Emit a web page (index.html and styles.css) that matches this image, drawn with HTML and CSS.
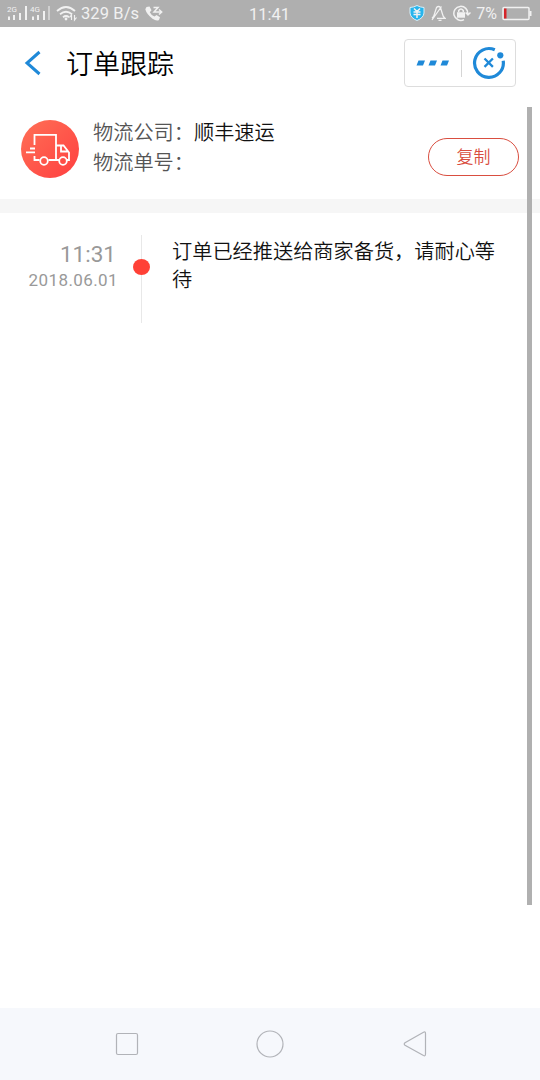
FILE: index.html
```html
<!DOCTYPE html>
<html lang="zh-CN">
<head>
  <meta charset="UTF-8" />
  <meta name="viewport" content="width=device-width, initial-scale=1.0"/>
  <title>订单跟踪</title>
  <link rel="stylesheet" href="styles.css">
</head>
<body>

  <div class="phone">
    <div class="status-bar">
      <div class="status-left">
        <svg class="signal" width="44" height="27" viewBox="0 0 44 27">
          <text x="0" y="12">2G</text>
          <text x="23" y="12">4G</text>
          <path d="M2 16.500v3.500M7 15v5M13 13v7M19 6v14M26 16.500v3.500M31 15v5M37 11v9" />
          <path class="dim" d="M42 6v14" />
        </svg>
        <svg class="wifi" width="22" height="27" viewBox="0 0 22 27">
          <path d="M1 11q9-8 18 0M4 14.300q6-5 12 0M7 17.300q3-2.500 6 0" />
          <circle cx="10" cy="19" r="1.400" />
          <path class="arrows" d="M15.500 20v-5l-2 2.500M18.500 15v5l2-2.500" />
        </svg>
        <span class="speed">329 B/s</span>
        <svg class="call" width="20" height="27" viewBox="0 0 20 27">
          <path class="handset" d="M2.500 7 5.500 6.500 7.500 10.300 5.800 12.200Q7 15 10.500 16.500L12.500 15 16 17.200 15 20Q12.500 21.500 8.500 18.700 2.500 14 1.300 9.200Z" />
          <path d="M9.500 7.500h4.500l-4 4.500h7.500M15 9.500l2.700 2.500-2.700 2.500" />
        </svg>
      </div>
      <span class="clock">11:41</span>
      <div class="status-right">
        <svg width="16" height="27" viewBox="0 0 16 27">
          <path class="shield" d="M8 5.500Q11 7.300 15 7.500V13Q14.500 18 8 20.500 1.500 18 1 13V7.500Q5 7.300 8 5.500Z" />
          <path class="yen" d="M5 8.500l3 3 3-3M4.500 12h7M4.500 14.500h7M8 11.500V18" />
        </svg>
        <svg class="bell" width="16" height="27" viewBox="0 0 16 27">
          <path d="M7 18.300h8q-2-1.500-2.600-4.500L10.500 7.500Q8.500 5.500 6.500 7.500L4.500 13.800q-.6 3-2.500 4.500M8.500 20.300h3M11.500 6.500 2 20" />
        </svg>
        <svg class="lock" width="19" height="27" viewBox="0 0 19 27">
          <path d="M15.800 14A7 7 0 1 0 12 19.600M13.700 12.500l2.300 2.500 2.500-2.500" />
          <rect x="5" y="12.200" width="8" height="5.500" />
          <path d="M6.700 12v-1.500q2.300-3 4.600 0V12" />
        </svg>
        <span class="percent">7%</span>
        <svg class="battery" width="30" height="27" viewBox="0 0 30 27">
          <rect class="case" x="1" y="7.500" width="26" height="12" rx="1" />
          <rect class="tip" x="27.500" y="11" width="2" height="5" />
          <rect class="level" x="2" y="8.500" width="2.500" height="10" />
        </svg>
      </div>
    </div>

    <header class="header">
      <svg class="back" width="18" height="26" viewBox="0 0 18 26">
        <path d="M16.500 2 4 13 16.500 24" />
      </svg>
      <h1>订单跟踪</h1>
      <div class="capsule">
        <svg width="34" height="8" viewBox="0 0 34 8">
          <path d="M2.500 1.500H9L7 6.500H.500ZM14.500 1.500H21L19 6.500H12.500ZM26.500 1.500H33L31 6.500H24.500Z" />
        </svg>
        <span class="divider"></span>
        <svg class="close" width="34" height="34" viewBox="0 0 34 34">
          <path class="ring" d="M22.800 3.800A14.400 14.400 0 1 0 31.200 14.800" />
          <circle cx="28.300" cy="9.300" r="3.100" />
          <path class="cross" d="M12.500 12.500l8.400 8.400M20.900 12.500l-8.400 8.400" />
        </svg>
      </div>
    </header>

    <section class="shipping">
      <svg class="truck" width="58" height="58" viewBox="0 0 58 58">
        <defs>
          <linearGradient id="red" x1="0" y1="0" x2="1" y2="1">
            <stop offset="0" stop-color="#ff7056" />
            <stop offset="1" stop-color="#ff3f40" />
          </linearGradient>
        </defs>
        <circle cx="29" cy="29" r="29" fill="url(#red)" />
        <path d="M13.500 25V14.800H35V40M35 25.500h7.500l5.500 7V40h-2.500M38 40H27.500M18.500 40h-5v-4M40 26v5.500h7" />
        <path d="M9 28.500h5M5 32.300h9" />
        <circle class="wheel" cx="23" cy="41" r="3.800" />
        <circle class="wheel" cx="42" cy="41" r="3.800" />
      </svg>
      <div class="shipping-info">
        <p>物流公司：<span>顺丰速运</span></p>
        <p>物流单号：</p>
      </div>
      <button class="copy">复制</button>
    </section>

    <section class="timeline">
      <div class="when">
        <div class="time">11:31</div>
        <div class="date">2018.06.01</div>
      </div>
      <div class="track"><span class="dot"></span></div>
      <p class="message">订单已经推送给商家备货，请耐心等待</p>
    </section>

    <nav class="nav-bar">
      <svg width="24" height="28" viewBox="0 0 24 28">
        <rect x="1.500" y="3.500" width="21" height="21" rx="1.500" />
      </svg>
      <svg width="28" height="28" viewBox="0 0 28 28">
        <circle cx="14" cy="14" r="13" />
      </svg>
      <svg width="26" height="28" viewBox="0 0 26 28">
        <path d="M22.500 2.200Q24.500 1.200 24.500 3.500V24Q24.500 26.500 22.500 25.500L4 15.200Q2.500 14 4 12.700Z" />
      </svg>
    </nav>

    <div class="scrollbar"></div>
  </div>

</body>
</html>
```

FILE: styles.css
```css
* {
  box-sizing: border-box;
}

body {
  margin: 0;
  background: #fff;
  font-family: Roboto, "Noto Sans CJK SC", sans-serif;
}

h1, p {
  margin: 0;
  font-weight: 350;
}

svg {
  display: block;
  flex-shrink: 0;
  fill: none;
}

.phone {
  position: relative;
  display: flex;
  flex-direction: column;
  width: 540px;
  height: 1080px;
  overflow: hidden;
}

/* status bar */
.status-bar {
  display: grid;
  grid-template-columns: 1fr auto 1fr;
  height: 27px;
  padding: 0 8px 0 7px;
  background: #afafaf;
  color: #f1f1f1;
  font-size: 16px;
  line-height: 28px;
}

.status-bar svg {
  stroke: #f1f1f1;
  stroke-width: 1.5;
}

.status-left, .status-right {
  display: flex;
}

.status-right {
  justify-content: flex-end;
}

.signal text {
  fill: #f1f1f1;
  stroke: none;
  font-size: 8px;
}

.signal path {
  stroke-width: 2;
}

.signal .dim {
  stroke: #d0d0d0;
}

.status-bar .wifi {
  margin-left: 5px;
  stroke-width: 1.8;
}

.wifi circle, .call .handset, .lock rect, .battery .tip {
  fill: #f1f1f1;
  stroke: none;
}

.wifi .arrows {
  stroke-width: 1.2;
}

.speed {
  width: 61px;
  margin-left: 3px;
  font-size: 16.5px;
  letter-spacing: 0.1px;
  white-space: nowrap;
}

.call {
  margin-left: 2px;
}

.clock {
  font-size: 16.5px;
  line-height: 29px;
}

.status-bar .shield {
  fill: #27b4ec;
  stroke: #d4f0fb;
  stroke-width: 1;
}

.status-bar .bell {
  margin-left: 5px;
  stroke-width: 1.3;
}

.lock {
  margin-left: 6px;
}

.percent {
  margin-left: 5px;
}

.battery {
  margin-left: 5px;
}

.battery .level {
  fill: #d52429;
  stroke: none;
}

/* header */
.header {
  display: flex;
  align-items: center;
  height: 72px;
  padding: 0 24px 0 23px;
}

.back {
  stroke: #1f89d8;
  stroke-width: 3;
}

.header h1 {
  margin-left: 25px;
  padding-top: 4px;
  color: #000;
  font-size: 27px;
  line-height: 36px;
}

.capsule {
  display: flex;
  align-items: center;
  width: 112px;
  height: 48px;
  margin-left: auto;
  padding-left: 11px;
  border: 1px solid #ddd;
  border-radius: 4px;
}

.capsule svg {
  fill: #1f89d8;
}

.divider {
  width: 1px;
  height: 27px;
  margin: 0 10px 0 11px;
  background: #d5d5d5;
}

.close .ring, .close .cross {
  fill: none;
  stroke: #1f89d8;
  stroke-width: 3.2;
}

.close .cross {
  stroke-width: 2.3;
}

/* shipping info */
.shipping {
  display: flex;
  align-items: flex-start;
  height: 114px;
  padding: 18px 21px 0 21px;
  border-bottom: 14px solid #f6f6f6;
}

.truck {
  margin-top: 3px;
}

.truck path, .truck .wheel {
  stroke: #fff;
  stroke-width: 1.8;
}

.shipping-info {
  margin: 1px 0 0 14px;
  color: #555;
  font-size: 20.2px;
  line-height: 30px;
}

.shipping-info span {
  color: #111;
}

.copy {
  width: 91px;
  height: 38px;
  margin: 21px 0 0 auto;
  padding: 0 0 4px;
  border: 1.5px solid #d94e40;
  border-radius: 19px;
  background: #fff;
  color: #d94e40;
  font-family: inherit;
  font-size: 17px;
  font-weight: 350;
}

/* tracking timeline */
.timeline {
  display: flex;
  flex: 1;
  align-items: flex-start;
  padding: 22px 40px 0 0;
}

.when {
  width: 118px;
  padding-top: 5px;
  color: #999;
  text-align: right;
}

.time {
  padding-right: 2px;
  font-size: 22.5px;
  line-height: 28px;
}

.date {
  font-size: 17px;
  letter-spacing: 0.4px;
  line-height: 24px;
}

.track {
  display: flex;
  justify-content: center;
  width: 17px;
  height: 88px;
  margin-left: 15px;
  background: linear-gradient(#e8e8e8, #e8e8e8) center / 1px 100% no-repeat;
}

.dot {
  width: 17px;
  height: 16px;
  margin-top: 24px;
  border-radius: 50%;
  background: #ff4136;
}

.message {
  flex: 1;
  padding-top: 3px;
  margin-left: 22px;
  color: #111;
  font-size: 20.2px;
  line-height: 28px;
}

/* android navigation */
.nav-bar {
  display: flex;
  align-items: center;
  justify-content: space-between;
  height: 72px;
  padding: 0 113px 0 115px;
  background: #f6f8fc;
}

.nav-bar svg {
  stroke: #b1b3b8;
  stroke-width: 1.2;
}

.scrollbar {
  position: absolute;
  top: 107px;
  right: 8px;
  width: 5px;
  height: 798px;
  background: #b0b0b0;
}
```
